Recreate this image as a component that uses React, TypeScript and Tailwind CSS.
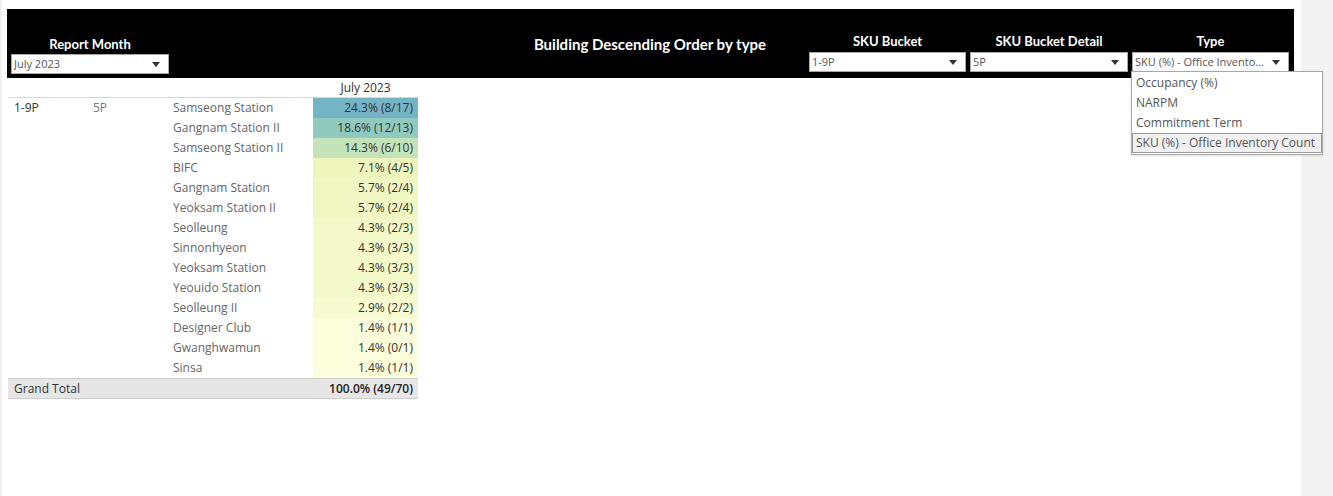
import React from "react";

type Row = { building: string; value: string; bg: string };

const rows: Row[] = [
  { building: "Samseong Station", value: "24.3% (8/17)", bg: "bg-[#75b4c4]" },
  { building: "Gangnam Station II", value: "18.6% (12/13)", bg: "bg-[#90cabe]" },
  { building: "Samseong Station II", value: "14.3% (6/10)", bg: "bg-[#c4e3b9]" },
  { building: "BIFC", value: "7.1% (4/5)", bg: "bg-[#edf5bd]" },
  { building: "Gangnam Station", value: "5.7% (2/4)", bg: "bg-[#f1f7c3]" },
  { building: "Yeoksam Station II", value: "5.7% (2/4)", bg: "bg-[#f1f7c3]" },
  { building: "Seolleung", value: "4.3% (2/3)", bg: "bg-[#f4f9c9]" },
  { building: "Sinnonhyeon", value: "4.3% (3/3)", bg: "bg-[#f4f9c9]" },
  { building: "Yeoksam Station", value: "4.3% (3/3)", bg: "bg-[#f4f9c9]" },
  { building: "Yeouido Station", value: "4.3% (3/3)", bg: "bg-[#f4f9c9]" },
  { building: "Seolleung II", value: "2.9% (2/2)", bg: "bg-[#f8fbd2]" },
  { building: "Designer Club", value: "1.4% (1/1)", bg: "bg-[#fcfddb]" },
  { building: "Gwanghwamun", value: "1.4% (0/1)", bg: "bg-[#fcfddb]" },
  { building: "Sinsa", value: "1.4% (1/1)", bg: "bg-[#fcfddb]" },
];

const typeOptions = ["Occupancy (%)", "NARPM", "Commitment Term", "SKU (%) - Office Inventory Count"];

function Arrow() {
  return (
    <svg width="8" height="5" viewBox="0 0 8 5" className="shrink-0">
      <polygon points="0,0 8,0 4,5" fill="#333" />
    </svg>
  );
}

function Dropdown({ value }: { value: string }) {
  return (
    <div className="flex h-[20px] items-center justify-between border border-[#a8a8a8] bg-white pl-[2px] pr-[8px] text-[11px] text-[#555]">
      <span className="truncate">{value}</span>
      <Arrow />
    </div>
  );
}

function Filter({ label, value, width, children }: { label: string; value: string; width: string; children?: React.ReactNode }) {
  return (
    <div className={`relative flex flex-col ${width}`}>
      <div className="h-[17px] text-center font-['Lato'] text-[13px] font-bold leading-[13px] text-white">{label}</div>
      <Dropdown value={value} />
      {children}
    </div>
  );
}

export default function App() {
  return (
    <div className="flex h-screen bg-white font-['Open_Sans'] text-[12px]">
      <div className="w-[2px] bg-[#f0f0f0]" />
      <div className="w-[1299px] pl-[5px] pt-[9px]">
        <div className="flex h-[69px] w-[1287px] bg-black">
          <div className="ml-[4px] mt-[27px] w-[158px]">
            <div className="h-[18px] text-center font-['Lato'] text-[13px] font-bold leading-[16px] text-white">Report Month</div>
            <Dropdown value="July 2023" />
          </div>
          <div className="ml-[351px] mt-[27px] w-[260px] whitespace-nowrap text-center font-['Lato'] text-[15px] font-bold leading-[17px] text-white">
            Building Descending Order by type
          </div>
          <div className="ml-[29px] mt-[26px] flex gap-[4px]">
            <Filter label="SKU Bucket" value="1-9P" width="w-[157px]" />
            <Filter label="SKU Bucket Detail" value="5P" width="w-[158px]" />
            <Filter label="Type" value="SKU (%) - Office Invento..." width="w-[157px]">
              <div className="absolute left-[-1px] top-[36px] z-10 w-[192px] border border-[#a8a8a8] bg-white py-[1px] text-[12px] text-[#555] shadow-sm">
                {typeOptions.map((o, i) => (
                  <div
                    key={o}
                    className={
                      i === typeOptions.length - 1
                        ? "flex h-[20px] items-center border border-[#9a9a9a] bg-[#f0f0f0] px-[3px]"
                        : "flex h-[20px] items-center px-[4px]"
                    }
                  >
                    {o}
                  </div>
                ))}
              </div>
            </Filter>
          </div>
        </div>

        <div className="ml-[1px] w-[410px]">
          <div className="flex h-[20px] border-b border-[#d6d6d6]">
            <div className="w-[305px]" />
            <div className="w-[105px] text-center leading-[19px] text-[#333]">July 2023</div>
          </div>
          {rows.map((r, i) => (
            <div key={r.building} className="flex h-[20px] leading-[20px]">
              <div className="w-[80px] pl-[6px] text-[#333]">{i === 0 ? "1-9P" : ""}</div>
              <div className="w-[80px] pl-[5px] text-[#777]">{i === 0 ? "5P" : ""}</div>
              <div className="w-[145px] whitespace-nowrap pl-[5px] text-[#666]">{r.building}</div>
              <div className={`w-[105px] pr-[5px] text-right text-[#333] ${r.bg}`}>{r.value}</div>
            </div>
          ))}
          <div className="flex h-[21px] border-y border-[#cdcdcd] bg-[#e6e6e6] leading-[19px]">
            <div className="w-[305px] pl-[6px] text-[#333]">Grand Total</div>
            <div className="w-[105px] pr-[5px] text-right font-semibold text-[#222]">100.0% (49/70)</div>
          </div>
        </div>
      </div>
      <div className="flex-1 bg-[#f3f3f3]" />
    </div>
  );
}
